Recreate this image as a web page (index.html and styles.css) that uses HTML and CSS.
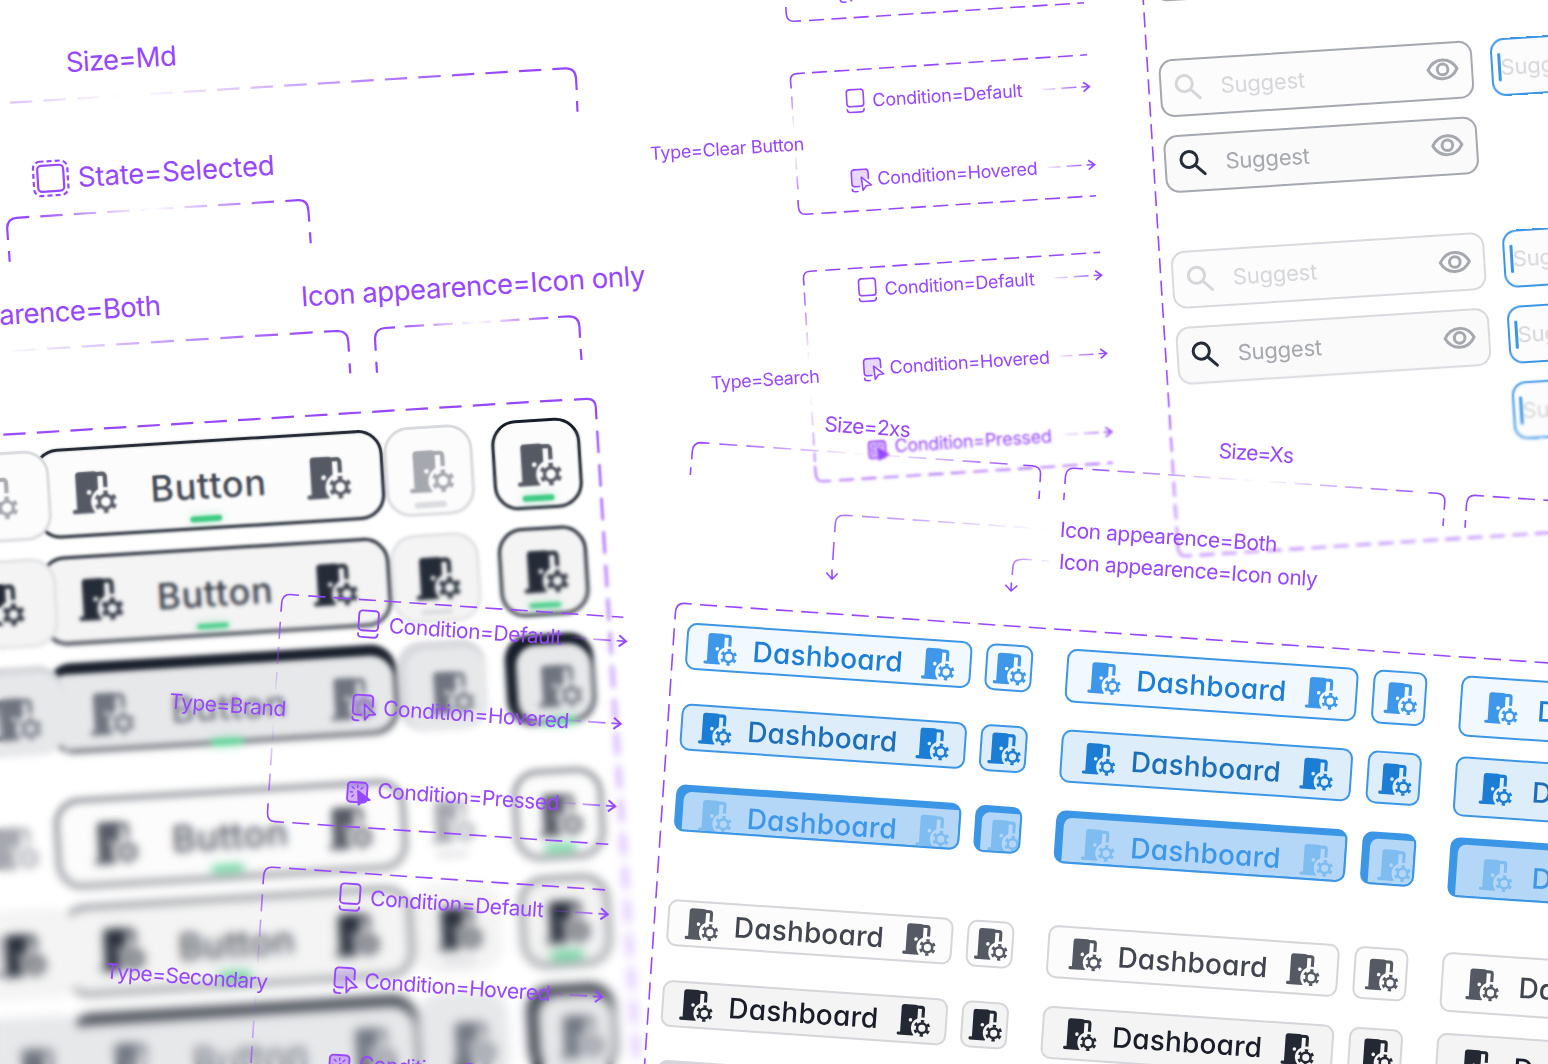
FILE: index.html
```html
<!DOCTYPE html>
<html lang="en">
<head>
<meta charset="utf-8">
<title>Component variants</title>
<link rel="stylesheet" href="styles.css">
</head>
<body>
<svg class="defs" width="0" height="0" aria-hidden="true">
  <defs>
    <mask id="doorCut" maskUnits="userSpaceOnUse" x="0" y="0" width="40" height="40">
      <rect width="40" height="40" fill="#fff"/>
      <circle cx="30.2" cy="28.1" r="10.9" fill="#000"/>
      <circle cx="18.3" cy="20.4" r="1.8" fill="#000"/>
    </mask>
    <symbol id="door" viewBox="0 0 40 40">
      <g mask="url(#doorCut)" fill="currentColor">
        <rect x="8.7" y="5" width="16.4" height="30" rx="2.8"/>
        <rect x="5.4" y="32.8" width="17" height="3.2" rx="1.4"/>
        <path d="M24 7.2h4.6a2 2 0 0 1 2 2V18" fill="none" stroke="currentColor" stroke-width="3.1"/>
      </g>
      <circle cx="30.2" cy="28.1" r="4.8" fill="none" stroke="currentColor" stroke-width="2.5"/>
      <circle cx="30.2" cy="28.1" r="7" fill="none" stroke="currentColor" stroke-width="2.7" stroke-dasharray="3.3 4.03" stroke-dashoffset="-2.02"/>
    </symbol>
    <symbol id="search" viewBox="0 0 40 40">
      <g fill="none" stroke="currentColor" stroke-width="3" stroke-linecap="round">
        <circle cx="15.8" cy="16.3" r="8.1"/><path d="M22 22.6l9 8.800"/>
      </g>
    </symbol>
    <symbol id="eye" viewBox="0 0 40 40">
      <g fill="none" stroke="currentColor" stroke-width="2.9" stroke-linejoin="round">
        <path d="M5.8 20C9 14 14 10.8 20 10.8S31 14 34.2 20C31 26 26 29.2 20 29.2S9 26 5.8 20z"/><circle cx="20" cy="20" r="5.2"/>
      </g>
    </symbol>
    <g id="default" fill="none" stroke="#9747ff" stroke-width="1.6" stroke-linecap="round">
      <rect x="-8.4" y="-8.5" width="16.8" height="17" rx="3"/>
      <path d="M-8.4 11.2c0 2 1 3 3 3H5.4c2 0 3-1 3-3"/>
    </g>
    <g id="hovered" fill="none" stroke="#9747ff" stroke-width="1.6" stroke-linecap="round" stroke-linejoin="round">
      <path d="M.6 8.5H-5.400a3 3 0 0 1-3-3v-11a3 3 0 0 1 3-3H5.4a3 3 0 0 1 3 3V2L1.300-1z" fill="#9747ff" fill-opacity=".22" stroke="none"/>
      <path d="M-1 8.500H-5.400a3 3 0 0 1-3-3v-11a3 3 0 0 1 3-3H5.4a3 3 0 0 1 3 3V1"/>
      <path d="M-8.400 10.700c0 1.800 1 2.700 3 2.700h2.500M1.300-.7 11 7.500 5.600 8.200 2.300 12.500z"/>
    </g>
    <g id="pressed" fill="none" stroke="#9747ff" stroke-width="1.600" stroke-linecap="round" stroke-linejoin="round">
      <rect x="-8.400" y="-8.500" width="16.800" height="17" rx="3" fill="#9747ff" fill-opacity=".4"/>
      <path d="M0-6v2M-4.500-4.500l1.500 1.500M4.500-4.500 3-3M-6 0h2M-4.500 4l1.500-1.500" stroke-width="1.200"/>
      <path d="M.6-1.200 11 5.800 5.500 6.500 1.800 10.500z" fill="#9747ff"/>
    </g>
    <linearGradient id="tail" gradientUnits="userSpaceOnUse" x1="-54" y1="0" x2="0" y2="0">
      <stop offset="0" stop-color="#9747ff" stop-opacity="0"/><stop offset=".75" stop-color="#9747ff" stop-opacity=".8"/><stop offset="1" stop-color="#9747ff"/>
    </linearGradient>
    <g id="arrow" fill="none" stroke-width="1.500">
      <path d="M0 0 L-54 .01" stroke="url(#tail)" stroke-dasharray="8 5 15 6 13 7"/>
      <path d="M-6-4.700 0 0l-6 4.700" stroke="#9747ff" stroke-width="1.700"/>
    </g>
    <linearGradient id="gSize" gradientUnits="userSpaceOnUse" x1="0" y1="0" x2="541" y2="0">
      <stop offset="0" stop-color="#9747ff" stop-opacity=".34"/><stop offset=".23" stop-color="#9747ff" stop-opacity="0"/><stop offset=".9" stop-color="#9747ff"/>
    </linearGradient>
    <linearGradient id="gState" gradientUnits="userSpaceOnUse" x1="29" y1="0" x2="285" y2="0">
      <stop offset="0" stop-color="#9747ff"/><stop offset=".48" stop-color="#9747ff" stop-opacity="0"/><stop offset="1" stop-color="#9747ff"/>
    </linearGradient>
    <linearGradient id="gBoth" gradientUnits="userSpaceOnUse" x1="0" y1="0" x2="315" y2="0">
      <stop offset="0" stop-color="#9747ff" stop-opacity="0"/><stop offset="1" stop-color="#9747ff"/>
    </linearGradient>
    <linearGradient id="gOnly" gradientUnits="userSpaceOnUse" x1="395" y1="0" x2="558" y2="0">
      <stop offset="0" stop-color="#9747ff"/><stop offset=".5" stop-color="#9747ff" stop-opacity="0"/><stop offset="1" stop-color="#9747ff"/>
    </linearGradient>
    <linearGradient id="gClear" gradientUnits="userSpaceOnUse" x1="0" y1="76" x2="0" y2="212">
      <stop offset="0" stop-color="#9747ff"/><stop offset=".4" stop-color="#9747ff" stop-opacity="0"/><stop offset=".55" stop-color="#9747ff" stop-opacity="0"/><stop offset="1" stop-color="#9747ff"/>
    </linearGradient>
    <linearGradient id="gSearch" gradientUnits="userSpaceOnUse" x1="0" y1="278" x2="0" y2="478">
      <stop offset="0" stop-color="#9747ff"/><stop offset=".42" stop-color="#9747ff" stop-opacity="0"/><stop offset=".58" stop-color="#9747ff" stop-opacity="0"/><stop offset="1" stop-color="#9747ff"/>
    </linearGradient>
    <linearGradient id="gBrand" gradientUnits="userSpaceOnUse" x1="0" y1="605" x2="0" y2="815">
      <stop offset="0" stop-color="#9747ff"/><stop offset=".45" stop-color="#9747ff" stop-opacity="0"/><stop offset=".55" stop-color="#9747ff" stop-opacity="0"/><stop offset="1" stop-color="#9747ff"/>
    </linearGradient>
    <linearGradient id="gSecond" gradientUnits="userSpaceOnUse" x1="0" y1="880" x2="0" y2="1085">
      <stop offset="0" stop-color="#9747ff"/><stop offset=".45" stop-color="#9747ff" stop-opacity="0"/><stop offset=".55" stop-color="#9747ff" stop-opacity="0"/><stop offset="1" stop-color="#9747ff"/>
    </linearGradient>
    <linearGradient id="g2xs" gradientUnits="userSpaceOnUse" x1="705" y1="0" x2="1030" y2="0">
      <stop offset="0" stop-color="#9747ff"/><stop offset=".5" stop-color="#9747ff" stop-opacity="0"/><stop offset="1" stop-color="#9747ff"/>
    </linearGradient>
    <linearGradient id="gXs" gradientUnits="userSpaceOnUse" x1="1080" y1="0" x2="1435" y2="0">
      <stop offset="0" stop-color="#9747ff"/><stop offset=".5" stop-color="#9747ff" stop-opacity="0"/><stop offset="1" stop-color="#9747ff"/>
    </linearGradient>
    <linearGradient id="gPtr" gradientUnits="userSpaceOnUse" x1="825" y1="570" x2="1045" y2="520">
      <stop offset="0" stop-color="#9747ff"/><stop offset=".2" stop-color="#9747ff" stop-opacity=".65"/><stop offset="1" stop-color="#9747ff" stop-opacity="0"/>
    </linearGradient>
    <linearGradient id="gPtr2" gradientUnits="userSpaceOnUse" x1="1005" y1="580" x2="1052" y2="560">
      <stop offset="0" stop-color="#9747ff"/><stop offset="1" stop-color="#9747ff" stop-opacity="0"/>
    </linearGradient>
  </defs>
</svg>

<main class="canvas">
  <!-- Toggle buttons, Md -->
  <svg class="layer" viewBox="0 0 1548 1064">
    <g class="wire md">
      <path d="M10 102.700 130 95.300M541.300 69.800 142 94.500" stroke="url(#gSize)" class="d22"/>
      <path d="M552.300 69.200 565 68.400Q575.400 68 576 78.300L576.700 90M577 101 577.500 111.700"/>
      <path d="M9 251 9.700 261.700M8 240 7.200 228.500Q7 218.700 16.700 217.800L29.300 216.900M285.300 201 298.300 200.100Q307.800 200 308.300 210L309.300 221.700M310 232.300 310.700 243.300"/>
      <path d="M40.300 216.300 150 209.300M274 201.700 150 209.300" stroke="url(#gState)" class="d22"/>
      <path d="M324 331.700 337 331Q347.500 331 348.200 341L349 351.700M349.600 363.300 350.300 373.300"/>
      <path d="M312.700 332.400 0 351.600" stroke="url(#gBoth)" class="d23"/>
      <path d="M376.300 361.700 377 372.700M375.700 350.700 375 338.300Q375.500 328.500 385 328L395 327.400M558 317 568.300 316.300Q578.800 316 579.400 326L580 337.700M580.700 349 581.500 360"/>
      <path d="M404.700 326.500 480 322.200M548.300 317.900 480 322.200" stroke="url(#gOnly)" class="d19"/>
      <path d="M3.300 434.700 563 400" class="d22"/>
      <path d="M574 399.700 586.700 398.800Q595.200 398.500 595.800 407L596.500 419.300"/>
      <path d="M597.200 430.700 637 1066" class="d22"/>
      <g transform="translate(50.700 178.300) rotate(-3.550)">
        <rect x="-13" y="-13" width="26" height="26" rx="4"/>
        <rect x="-17.200" y="-17.200" width="34.400" height="34.400" rx="7" stroke-dasharray="5 3.130" stroke-dashoffset="1"/>
      </g>
    </g>
    <g class="label md">
      <text transform="translate(66.500 72.200) rotate(-3.550)" textLength="111">Size=Md</text>
      <text transform="translate(78.500 187) rotate(-3.550)" textLength="197">State=Selected</text>
      <text transform="translate(-124 332.800) rotate(-3.550)" textLength="286">Icon appearence=Both</text>
      <text transform="translate(301.500 306.500) rotate(-3.550)" textLength="345">Icon appearence=Icon only</text>
    </g>
  </svg>
  <section class="board toggles">
    <div class="row">
      <div class="tb wide rest"><svg class="end"><use href="#door"/></svg></div>
      <div class="tb wide on"><svg><use href="#door"/></svg><span>Button</span><svg><use href="#door"/></svg></div>
      <div class="tb rest"><svg><use href="#door"/></svg></div>
      <div class="tb on"><svg><use href="#door"/></svg></div>
    </div>
    <div class="row hover">
      <div class="tb wide rest"><svg class="end"><use href="#door"/></svg></div>
      <div class="tb wide on"><svg><use href="#door"/></svg><span>Button</span><svg><use href="#door"/></svg></div>
      <div class="tb rest"><svg><use href="#door"/></svg></div>
      <div class="tb on"><svg><use href="#door"/></svg></div>
    </div>
    <div class="row press">
      <div class="tb wide rest"><svg class="end"><use href="#door"/></svg></div>
      <div class="tb wide on"><svg><use href="#door"/></svg><span>Button</span><svg><use href="#door"/></svg></div>
      <div class="tb rest"><svg><use href="#door"/></svg></div>
      <div class="tb on"><svg><use href="#door"/></svg></div>
    </div>
    <div class="row ghost first">
      <div class="tb wide rest"><svg class="end"><use href="#door"/></svg></div>
      <div class="tb wide on"><svg><use href="#door"/></svg><span>Button</span><svg><use href="#door"/></svg></div>
      <div class="tb rest"><svg><use href="#door"/></svg></div>
      <div class="tb on"><svg><use href="#door"/></svg></div>
    </div>
    <div class="row ghost hover">
      <div class="tb wide rest"><svg class="end"><use href="#door"/></svg></div>
      <div class="tb wide on"><svg><use href="#door"/></svg><span>Button</span><svg><use href="#door"/></svg></div>
      <div class="tb rest"><svg><use href="#door"/></svg></div>
      <div class="tb on"><svg><use href="#door"/></svg></div>
    </div>
    <div class="row ghost press">
      <div class="tb wide rest"><svg class="end"><use href="#door"/></svg></div>
      <div class="tb wide on"><svg><use href="#door"/></svg><span>Button</span><svg><use href="#door"/></svg></div>
      <div class="tb rest"><svg><use href="#door"/></svg></div>
      <div class="tb on"><svg><use href="#door"/></svg></div>
    </div>
  </section>
  <div class="veil left v1"></div>
  <div class="veil left v2"></div>
  <div class="veil left v3"></div>
  <div class="veil left v4"></div>
  <div class="veil left v5"></div>
  <div class="veil left v6"></div>
  <div class="veil left v7"></div>

  <!-- Text fields -->
  <svg class="layer" viewBox="0 0 1548 1064">
    <g class="wire">
      <path d="M785.800 7 786.300 14Q787 21.500 794 21.300L801 20.900"/>
      <path d="M809 20.500 1084 2.800" class="d15"/>
      <path d="M805 73 797 73.600Q790 74 790.500 81L791.200 88.500" />
      <path d="M812 72.600 1087 54.800" class="d15"/>
      <path d="M791.700 96.500 798.300 196" stroke="url(#gClear)" class="d13"/>
      <path d="M797.900 200 798.500 207.500Q799.300 214.700 806 214.300L813.500 213.800"/>
      <path d="M821.500 213.300 1096 195.800" class="d15"/>
      <path d="M817 270.800 810 271.300Q803 271.700 803.500 278.500L804 285.500"/>
      <path d="M825.300 270.200 1100 252.400" class="d15"/>
      <path d="M804.400 292.500 815 462" stroke="url(#gSearch)" class="d13"/>
      <path d="M815.100 466 815.700 474Q816.500 481.700 823 481.300L831 480.700"/>
      <path d="M839 480.300 1113 462.800" class="d15"/>
      <path d="M1142.600-10 1177.400 540" class="d15"/>
      <path d="M1177.200 538 1177.800 547Q1178.600 556.500 1186 556L1192 555.600"/>
      <path d="M1199.500 555.100 1560 532" class="d15"/>
    </g>
    <g class="label sm">
      <text transform="translate(650.500 160) rotate(-3.650)" textLength="154.500">Type=Clear Button</text>
      <text transform="translate(711.300 389.500) rotate(-3.650)" textLength="109">Type=Search</text>
      <text transform="translate(872.800 106.500) rotate(-3.650)" textLength="150.500">Condition=Default</text>
      <text transform="translate(877.800 184.800) rotate(-3.650)" textLength="160.500">Condition=Hovered</text>
      <text transform="translate(884.900 295) rotate(-3.650)" textLength="150.500">Condition=Default</text>
      <text transform="translate(890 373.700) rotate(-3.650)" textLength="160.500">Condition=Hovered</text>
      <text transform="translate(895 452.300) rotate(-3.650)" textLength="157.500">Condition=Pressed</text>
    </g>
    <use href="#default" transform="translate(855 98) rotate(-3.650)"/>
    <use href="#hovered" transform="translate(848 -11.500) rotate(-3.650)"/>
    <use href="#hovered" transform="translate(860 178) rotate(-3.650)"/>
    <use href="#default" transform="translate(867.200 287) rotate(-3.650)"/>
    <use href="#hovered" transform="translate(872.300 367) rotate(-3.650)"/>
    <use href="#pressed" transform="translate(877.300 449.700) rotate(-3.650)"/>
    <use href="#arrow" transform="translate(1089.300 86.500) rotate(-3.650)"/>
    <use href="#arrow" transform="translate(1094.500 164.500) rotate(-3.650)"/>
    <use href="#arrow" transform="translate(1101.500 275) rotate(-3.650)"/>
    <use href="#arrow" transform="translate(1106.500 353.300) rotate(-3.650)"/>
    <use href="#arrow" transform="translate(1111.700 431.700) rotate(-3.650)"/>
  </svg>
  <section class="board fields">
    <div class="row"><div class="field strong"></div></div>
    <div class="row group"><div class="field strong"><svg><use href="#search"/></svg><span>Suggest</span><svg class="eye"><use href="#eye"/></svg></div><div class="field focus"><i></i><span>Suggest</span></div></div>
    <div class="row"><div class="field strong hover"><svg><use href="#search"/></svg><span>Suggest</span><svg class="eye"><use href="#eye"/></svg></div></div>
    <div class="row group"><div class="field"><svg><use href="#search"/></svg><span>Suggest</span><svg class="eye"><use href="#eye"/></svg></div><div class="field focus"><i></i><span>Suggest</span></div></div>
    <div class="row"><div class="field hover"><svg><use href="#search"/></svg><span>Suggest</span><svg class="eye"><use href="#eye"/></svg></div><div class="field focus"><i></i><span>Suggest</span></div></div>
    <div class="row"><div class="field blank"></div><div class="field focus"><i></i><span>Suggest</span></div></div>
  </section>
  <div class="veil right w1"></div>
  <div class="veil right w2"></div>
  <div class="veil right w3"></div>

  <!-- Dashboard buttons, 2xs / Xs / Sm -->
  <section class="board dash">
    <div class="row">
      <div class="db"><svg><use href="#door"/></svg><span>Dashboard</span><svg><use href="#door"/></svg></div><div class="db icon"><svg><use href="#door"/></svg></div>
      <div class="db xs"><svg><use href="#door"/></svg><span>Dashboard</span><svg><use href="#door"/></svg></div><div class="db xs icon"><svg><use href="#door"/></svg></div>
      <div class="db s"><svg><use href="#door"/></svg><span>Dashboard</span><svg><use href="#door"/></svg></div>
    </div>
    <div class="row hover">
      <div class="db"><svg><use href="#door"/></svg><span>Dashboard</span><svg><use href="#door"/></svg></div><div class="db icon"><svg><use href="#door"/></svg></div>
      <div class="db xs"><svg><use href="#door"/></svg><span>Dashboard</span><svg><use href="#door"/></svg></div><div class="db xs icon"><svg><use href="#door"/></svg></div>
      <div class="db s"><svg><use href="#door"/></svg><span>Dashboard</span><svg><use href="#door"/></svg></div>
    </div>
    <div class="row press">
      <div class="db"><svg><use href="#door"/></svg><span>Dashboard</span><svg><use href="#door"/></svg></div><div class="db icon"><svg><use href="#door"/></svg></div>
      <div class="db xs"><svg><use href="#door"/></svg><span>Dashboard</span><svg><use href="#door"/></svg></div><div class="db xs icon"><svg><use href="#door"/></svg></div>
      <div class="db s"><svg><use href="#door"/></svg><span>Dashboard</span><svg><use href="#door"/></svg></div>
    </div>
    <div class="row grey first">
      <div class="db"><svg><use href="#door"/></svg><span>Dashboard</span><svg><use href="#door"/></svg></div><div class="db icon"><svg><use href="#door"/></svg></div>
      <div class="db xs"><svg><use href="#door"/></svg><span>Dashboard</span><svg><use href="#door"/></svg></div><div class="db xs icon"><svg><use href="#door"/></svg></div>
      <div class="db s"><svg><use href="#door"/></svg><span>Dashboard</span><svg><use href="#door"/></svg></div>
    </div>
    <div class="row grey hover">
      <div class="db"><svg><use href="#door"/></svg><span>Dashboard</span><svg><use href="#door"/></svg></div><div class="db icon"><svg><use href="#door"/></svg></div>
      <div class="db xs"><svg><use href="#door"/></svg><span>Dashboard</span><svg><use href="#door"/></svg></div><div class="db xs icon"><svg><use href="#door"/></svg></div>
      <div class="db s"><svg><use href="#door"/></svg><span>Dashboard</span><svg><use href="#door"/></svg></div>
    </div>
    <div class="row grey press"><div class="db"></div></div>
  </section>
  <svg class="layer" viewBox="0 0 1548 1064">
    <g class="wire">
      <path d="M690.300 475 690.900 467.300M691.700 459.300 692.200 451.500Q693 442.600 701 442.600L709.500 443.200M1023.300 465.200 1032 465.800Q1040.800 466.600 1040.500 474L1040 482.300M1039.500 490.700 1039 499"/>
      <path d="M719.300 444 1014.500 464.500" stroke="url(#g2xs)" class="d18"/>
      <path d="M1063.800 500 1064.300 492.700M1064.900 484 1065.500 476Q1066.500 468 1074 468.200L1083 468.800M1428.300 492.700 1437 493.300Q1445.200 494.200 1444.800 501.500L1444.200 509.800M1443.600 518.300 1443 526"/>
      <path d="M1092.300 469.500 1420 492" stroke="url(#gXs)" class="d17"/>
      <path d="M1465 527.700 1465.500 520M1466 511 1466.600 503.500Q1467.500 495.200 1475 495.400L1484 496"/>
      <path d="M1492.700 496.600 1560 501.200" class="d17"/>
      <path d="M852.700 515.700 844 515.200Q836 515.200 835.400 523L834.700 532.300M834 542 832.800 560" stroke="url(#gPtr)"/>
      <path d="M862 516.400 1048 529.100" stroke="url(#gPtr)" class="d17"/>
      <path d="M832 569.500V579M826.300 572.500 832 579 837.700 573.500"/>
      <path d="M1031.700 559.700 1024 559.200Q1014 559 1013 566L1012.200 575M1042 560.700 1050 561.300" stroke="url(#gPtr2)"/>
      <path d="M1011.400 582.500 1011 591M1005.300 584.800 1011 591 1017.300 585.700"/>
      <path d="M674.900 619.500 675.500 612Q676.300 603.300 684 603.400L691.700 604"/>
      <path d="M700 604.700 1560 663.700" class="d17"/>
      <path d="M674.300 628.300 644.200 1070" class="d17"/>
      <path d="M281 611.700 281.700 603Q282.500 594.300 290 594.500L299 595.200M268.100 803.300 267.500 813Q267.500 821.300 275 821.600L284 822.200"/>
      <path d="M308.300 595.900 623.300 617.300M292.300 822.800 608.300 844.300" class="d17"/>
      <path d="M280.300 621.700 268.600 796" stroke="url(#gBrand)" class="d17"/>
      <path d="M263 884.300 263.700 875.500Q264.500 867 272 867.200L280.700 867.800"/>
      <path d="M289 868.400 605 889.900" class="d17"/>
      <path d="M262.400 894.300 250.500 1070" stroke="url(#gSecond)" class="d17"/>
    </g>
    <g class="label">
      <text transform="translate(824 431.300) rotate(3.900)" textLength="86.500">Size=2xs</text>
      <text transform="translate(1218.300 458) rotate(3.900)" textLength="75.500">Size=Xs</text>
      <text transform="translate(1059.500 536.800) rotate(3.900)" textLength="218">Icon appearence=Both</text>
      <text transform="translate(1058.400 568.800) rotate(3.900)" textLength="259.500">Icon appearence=Icon only</text>
      <text transform="translate(169 708.500) rotate(3.900)" textLength="117">Type=Brand</text>
      <text transform="translate(105 978.300) rotate(3.900)" textLength="163">Type=Secondary</text>
      <text transform="translate(388.500 633) rotate(3.900)" textLength="173.500">Condition=Default</text>
      <text transform="translate(382.700 715.600) rotate(3.900)" textLength="186.500">Condition=Hovered</text>
      <text transform="translate(377 798) rotate(3.900)" textLength="182.500">Condition=Pressed</text>
      <text transform="translate(369.800 905.500) rotate(3.900)" textLength="174">Condition=Default</text>
      <text transform="translate(364 988.300) rotate(3.900)" textLength="186.500">Condition=Hovered</text>
      <text transform="translate(358.500 1071) rotate(3.900)" textLength="182.500">Condition=Pressed</text>
    </g>
    <use href="#default" transform="translate(368.700 620.700) rotate(3.900) scale(1.170)"/>
    <use href="#hovered" transform="translate(363 705) rotate(3.900) scale(1.170)"/>
    <use href="#pressed" transform="translate(357.300 792.300) rotate(3.900) scale(1.170)"/>
    <use href="#default" transform="translate(350.300 893.700) rotate(3.900) scale(1.170)"/>
    <use href="#hovered" transform="translate(344.700 977.700) rotate(3.900) scale(1.170)"/>
    <use href="#pressed" transform="translate(339.300 1065) rotate(3.900) scale(1.170)"/>
    <use href="#arrow" transform="translate(626 641.300) rotate(3.900) scale(1.170)"/>
    <use href="#arrow" transform="translate(620.700 723.800) rotate(3.900) scale(1.170)"/>
    <use href="#arrow" transform="translate(615.200 806.300) rotate(3.900) scale(1.170)"/>
    <use href="#arrow" transform="translate(607.700 914.300) rotate(3.900) scale(1.170)"/>
    <use href="#arrow" transform="translate(602.200 997) rotate(3.900) scale(1.170)"/>
  </svg>
</main>
</body>
</html>
```
FILE: styles.css
```css
* { box-sizing: border-box; }
body { margin: 0; background: #fff; font-family: Inter, "Liberation Sans", sans-serif; }
.defs { position: absolute; }
.canvas { position: relative; width: 1548px; height: 1064px; overflow: hidden; background: #fff; }
.layer { position: absolute; inset: 0; width: 1548px; height: 1064px; }
.board { position: absolute; transform-origin: 0 0; display: flex; flex-direction: column; width: max-content; }
.row { display: flex; align-items: flex-start; }
svg { display: block; flex: none; }

/* Annotation wires and labels */
.wire path, .wire rect { fill: none; stroke-width: 1.6; }
.wire { stroke: #9747ff; }
.wire.md path, .wire.md rect { stroke-width: 2.2; }
.d13 { stroke-dasharray: 13 7; }
.d15 { stroke-dasharray: 15 7.4; }
.d17 { stroke-dasharray: 17.1 8.25; }
.d18 { stroke-dasharray: 18 9.1; }
.d19 { stroke-dasharray: 19.3 9.6; }
.d22 { stroke-dasharray: 22.4 11.2; }
.d23 { stroke-dasharray: 23 11.75; }
.label { fill: #9747ff; font-size: 21px; }
.label.sm { font-size: 18px; }
.label.md { font-size: 27.500px; }

/* Toggle buttons */
.toggles { left: 0; top: 440px; transform: rotate(-3.55deg) translate(-303px, 12.2px); gap: 18.1px; }
.toggles .first { margin-top: 28px; }
.tb {
  --line: #d9dade; --fill: #fcfcfc; --icon: #a6a8af; --ink: #a6a8af;
  position: relative; isolation: isolate; display: flex; align-items: center; justify-content: center;
  width: 89.5px; height: 89.5px; border: 3px solid var(--line); border-radius: 25px;
  background: var(--fill); color: var(--icon);
}
.tb.wide { width: 349.5px; padding: 0 28px 0 27px; justify-content: space-between; }
.tb svg { width: 54px; height: 54px; }
.tb .end { margin-left: auto; }
.tb span { color: var(--ink); font-size: 36px; font-weight: 500; letter-spacing: .8px; padding-top: 3px; font-feature-settings: "cv11", "ss01"; }
.tb::after { content: ""; position: absolute; left: calc(50% - 16px); bottom: 5px; width: 32px; height: 5.500px; border-radius: 3px; background: #dadbde; }
.tb.wide::after { left: calc(50% - 20.500px); }
.tb.on { --line: #171d29; --icon: #565a64; --ink: #444955; }
.tb.on::after { background: #3ecb83; box-shadow: 0 0 10px #3ecb8366; }
.tb.wide.rest { z-index: 1; margin-right: -15.5px; }
.tb.wide.on { margin-right: 1px; }
.tb.rest:nth-child(3) { margin-right: 18.5px; }
.tb.wide.rest::after { display: none; }
.hover .tb { --fill: #f4f4f4; --icon: #262c38; --ink: #3a404b; --line: #e0e1e4; }
.hover .tb.on { --line: #171d29; }
.press .tb { --fill: #e7e8ea; --icon: #6f747f; --ink: #6f747f; background: var(--line); border: 0; }
.press .tb::before { content: ""; position: absolute; z-index: -1; inset: 11px 3px 3px 11px; border-radius: 20px 23px 23px 20px; background: var(--fill); }
.press .tb.wide::before { border-radius: 8px 23px 23px 8px; }
.press .tb.rest::before { inset: 9px 0 0 9px; }
.press .tb svg, .press .tb span { position: relative; left: 7px; top: 7px; }
.press .tb::after { bottom: -1px; margin-left: 7px; }
.press .tb.rest::after { display: none; }
.ghost .tb.rest { --line: var(--fill); }
.ghost .tb.on { --line: #3a3f49; }
.ghost .tb.rest.wide { z-index: 1; }
.ghost.first .tb.rest { background: none; border-color: transparent; }

/* Depth of field over the toggle board and the lower edge of the fields */
.veil { position: absolute; }
.veil.left { left: 0; width: 660px; bottom: 0; }
.v1 { top: 430px; backdrop-filter: blur(.8px); mask-image: linear-gradient(176.4deg, transparent, #000 80px); }
.v2 { top: 490px; backdrop-filter: blur(1.1px); mask-image: linear-gradient(176.4deg, transparent 20px, #000 80px); }
.v3 { top: 550px; backdrop-filter: blur(1.4px); mask-image: linear-gradient(176.4deg, transparent 20px, #000 90px); }
.v4 { top: 620px; backdrop-filter: blur(1.9px); mask-image: linear-gradient(176.4deg, transparent 20px, #000 90px); }
.v5 { top: 700px; backdrop-filter: blur(2.4px); mask-image: linear-gradient(176.4deg, transparent 20px, #000 90px); }
.v6 { top: 790px; backdrop-filter: blur(2.4px); mask-image: linear-gradient(176.4deg, transparent 20px, #000 100px); }
.v7 { top: 880px; backdrop-filter: blur(2.6px); mask-image: linear-gradient(176.4deg, transparent 20px, #000 100px); }
.veil.right { left: 660px; right: 0; height: 300px; }
.w1 { top: 310px; backdrop-filter: blur(.6px); mask-image: linear-gradient(176.4deg, transparent 30px, #000 100px); }
.w2 { top: 365px; backdrop-filter: blur(1.1px); mask-image: linear-gradient(176.4deg, transparent 30px, #000 100px); }
.w3 { top: 420px; backdrop-filter: blur(1.8px); mask-image: linear-gradient(176.4deg, transparent 30px, #000 110px); }

/* Text fields */
.fields { left: 1140px; top: 0; transform: rotate(-3.65deg) translate(14px, -55px); gap: 18.5px; }
.fields .group { margin-top: 40.2px; }
.row .field + .field { margin-left: 18px; }
.field {
  --ink: #d6d7db; --icon: #d6d7db; position: relative; display: flex; align-items: center;
  width: 313.5px; height: 57.5px; padding: 0 8px 0 7px; border: 2px solid #d9dade; border-radius: 14px;
  background: #fcfcfc; color: var(--icon);
}
.field svg { width: 40px; height: 40px; }
.field span { margin-left: 12px; color: var(--ink); font-size: 22px; letter-spacing: -.2px; font-feature-settings: "cv11", "ss01"; }
.field .eye { width: 41px; height: 41px; margin: -2px 0 0 auto; color: #a6a8af; }
.field.strong { border-color: #a6a8af; }
.field.hover { --ink: #a6a8af; --icon: #262c38; background: #fafafa; }
.field.focus { border: 2px solid #3c96e6; padding: 0 0 0 5px; }
.field.focus i { width: 3px; height: 28.5px; background: #3c96e6; border-radius: 1px; }
.field.focus span { margin-left: 0; }
.field.blank { visibility: hidden; }

/* Dashboard buttons */
.dash { left: 676.2px; top: 602.9px; transform: rotate(3.9deg) translate(13px, 18.5px); gap: 0; }
.dash .row { height: 80.8px; }
.dash .first { margin-top: 34.5px; }
.db {
  --line: #3c96e6; --fill: #f2f8ff; --icon: #3e97e8; --ink: #1c7ed6;
  position: relative; isolation: isolate; display: flex; align-items: center; justify-content: space-between;
  flex: none; width: 285.500px; height: 47px; padding: 0 12.500px 0 11px; margin-right: 14px; overflow: hidden;
  border: 2px solid var(--line); border-radius: 10px; background: var(--fill); color: var(--icon);
}
.db svg { width: 40px; height: 40px; }
.db span { color: var(--ink); font-size: 28px; font-weight: 500; letter-spacing: .2px; margin-right: -.2px; padding-top: 2px; font-feature-settings: "cv11", "ss01"; }
.db.icon { width: 47.500px; padding: 0; justify-content: center; margin-right: 34px; }
.db.xs { width: 292px; height: 53.5px; padding: 0 15px 0 14.5px; margin-right: 15px; border-radius: 10px; }
.db.xs.icon { width: 53.500px; padding: 0; margin-right: 34.5px; }
.db.s { width: 306px; height: 60.5px; padding: 0 18px; }
.hover .db { --fill: #deedfa; --icon: #1b7dd4; --ink: #1c6fb8; }
.press .db { --fill: #b4d6f7; --icon: #7fbcf0; --ink: #3e97e8; background: var(--line); }
.press .db::before { content: ""; position: absolute; z-index: -1; inset: 5.500px 0 0 5.500px; border-radius: 8px 0 8px 0; background: var(--fill); }
.press .db svg, .press .db span { position: relative; left: 5.500px; top: 5.500px; }
.grey .db { --line: #d5d5da; --fill: #fcfcfc; --icon: #555963; --ink: #40454f; }
.grey.hover .db { --fill: #f4f4f4; --icon: #232833; --ink: #1a1e29; }
.grey.press .db { --fill: #e7e8ea; }
```
